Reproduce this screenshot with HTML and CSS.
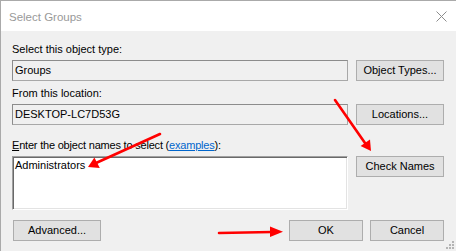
FILE: index.html
```html
<!DOCTYPE html>
<html>
<head>
<meta charset="utf-8">
<link rel="stylesheet" href="styles.css">
</head>
<body>
<div class="window">
  <div class="titlebar">
    <span class="title">Select Groups</span>
    <svg class="close" width="11" height="11" viewBox="0 0 11 11"><path d="M0.5 0.5 L10.5 10.5 M10.5 0.5 L0.5 10.5" stroke="#8c8c8c" stroke-width="1" fill="none"/></svg>
  </div>
  <div class="content">
    <div class="section s1">
      <div class="label">Select this object type:</div>
      <div class="field readonly">Groups</div>
      <div class="btn">Object Types...</div>
    </div>
    <div class="section s2">
      <div class="label">From this location:</div>
      <div class="field readonly">DESKTOP-LC7D53G</div>
      <div class="btn">Locations...</div>
    </div>
    <div class="section s3">
      <div class="label tight"><u>E</u>nter the object names to select (<span class="link">examples</span>):</div>
      <div class="field area">Administrators</div>
      <div class="btn">Check Names</div>
    </div>
    <div class="footer">
      <div class="btn adv">Advanced...</div>
      <div class="actions">
        <div class="btn small">OK</div>
        <div class="btn small">Cancel</div>
      </div>
    </div>
  </div>
  <svg class="grip" width="9" height="9" viewBox="0 0 9 9">
    <rect x="7" y="1" width="2" height="2" fill="#b4b4b4"/>
    <rect x="4" y="4" width="2" height="2" fill="#b4b4b4"/>
    <rect x="7" y="4" width="2" height="2" fill="#b4b4b4"/>
    <rect x="1" y="7" width="2" height="2" fill="#b4b4b4"/>
    <rect x="4" y="7" width="2" height="2" fill="#b4b4b4"/>
    <rect x="7" y="7" width="2" height="2" fill="#b4b4b4"/>
  </svg>
  <svg class="arrows" width="456" height="251" viewBox="0 0 456 251">
    <g stroke="#f00" stroke-width="2.6" stroke-linecap="round" fill="none">
      <line x1="160" y1="134" x2="96" y2="163"/>
      <line x1="335" y1="100" x2="365" y2="143"/>
      <line x1="219" y1="233" x2="272" y2="232"/>
    </g>
    <g fill="#f00">
      <polygon points="88,167 99.8,168 94.4,157.6"/>
      <polygon points="371,151 360.6,146 370,139.4"/>
      <polygon points="283,231.8 270,226.5 270,237"/>
    </g>
  </svg>
</div>
</body>
</html>
```
FILE: styles.css
```css
html, body {
  margin: 0;
  padding: 0;
  width: 456px;
  height: 251px;
  overflow: hidden;
}
.window {
  position: relative;
  width: 456px;
  height: 251px;
  box-sizing: border-box;
  border-top: 1px solid #aaaaaa;
  border-left: 1px solid #aaaaaa;
  background: #f0f0f0;
  font-family: "Liberation Sans", Arial, sans-serif;
  font-size: 11px;
  color: #000;
}
.titlebar {
  height: 30px;
  background: #fff;
  display: flex;
  align-items: center;
  justify-content: space-between;
  padding: 0 9px 0 8px;
}
.title {
  font-size: 11.5px;
  color: #999999;
  margin-top: 1px;
}
.close {
  display: block;
}
.content {
  padding: 12px 12px 0 11px;
}
.section {
  display: grid;
  grid-template-columns: 336px 88px;
  column-gap: 8px;
  align-items: start;
}
.label {
  grid-column: 1 / span 2;
  line-height: 13px;
  height: 13px;
  margin-bottom: 4px;
  white-space: nowrap;
}
.tight {
  letter-spacing: -0.2px;
}
.s2 { margin-top: 6px; }
.s3 { margin-top: 14px; }
.link {
  color: #0066cc;
  text-decoration: underline;
}
.field {
  box-sizing: border-box;
  height: 21px;
  line-height: 17px;
  padding: 1px 2px;
  border: 1px solid;
  white-space: nowrap;
}
.readonly {
  background: #f0f0f0;
  border-color: #8c8c8c #a8a8a8 #a8a8a8 #8c8c8c;
  padding-left: 2px;
}
.area {
  height: 54px;
  background: #fff;
  line-height: 13px;
  padding-top: 2px;
  border-color: #a0a0a0 #ffffff #ffffff #a0a0a0;
  box-shadow: inset 1px 1px 0 #696969, inset -1px -1px 0 #e3e3e3;
}
.btn {
  box-sizing: border-box;
  height: 21px;
  background: #e1e1e1;
  border: 1px solid #adadad;
  display: flex;
  align-items: center;
  justify-content: center;
  white-space: nowrap;
  line-height: 13px;
}
.footer {
  display: flex;
  justify-content: space-between;
  margin-top: 10px;
}
.adv {
  width: 88px;
  margin-left: 1px;
}
.actions {
  display: flex;
  gap: 7px;
}
.small {
  width: 74px;
}
.grip {
  position: absolute;
  right: 2px;
  bottom: 2px;
}
.arrows {
  position: absolute;
  left: -1px;
  top: -1px;
  pointer-events: none;
}
```
